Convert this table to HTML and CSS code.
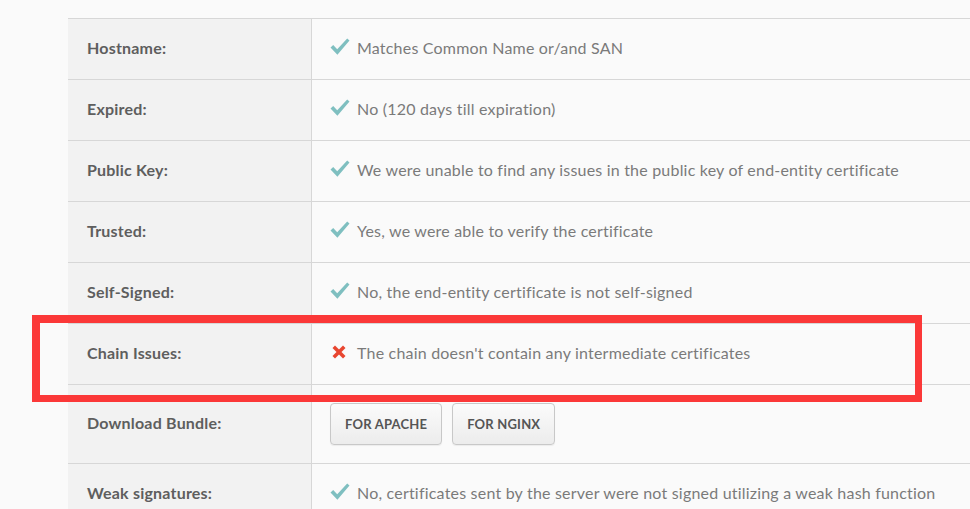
FILE: index.html
```html
<!DOCTYPE html>
<html>
<head>
<meta charset="utf-8">
<link rel="stylesheet" href="styles.css">
</head>
<body>
<div class="page">
  <div class="table">
    <div class="row">
      <div class="label">Hostname:</div>
      <div class="value"><svg class="ico ok" viewBox="0 0 20 18"><path d="M0.5 9.5 L3.2 7 L7.2 11.2 L17.2 0.5 L19.5 2.6 L7.4 16.8 Z"/></svg><span>Matches Common Name or/and SAN</span></div>
    </div>
    <div class="row">
      <div class="label">Expired:</div>
      <div class="value"><svg class="ico ok" viewBox="0 0 20 18"><path d="M0.5 9.5 L3.2 7 L7.2 11.2 L17.2 0.5 L19.5 2.6 L7.4 16.8 Z"/></svg><span>No (120 days till expiration)</span></div>
    </div>
    <div class="row">
      <div class="label">Public Key:</div>
      <div class="value"><svg class="ico ok" viewBox="0 0 20 18"><path d="M0.5 9.5 L3.2 7 L7.2 11.2 L17.2 0.5 L19.5 2.6 L7.4 16.8 Z"/></svg><span>We were unable to find any issues in the public key of end-entity certificate</span></div>
    </div>
    <div class="row">
      <div class="label">Trusted:</div>
      <div class="value"><svg class="ico ok" viewBox="0 0 20 18"><path d="M0.5 9.5 L3.2 7 L7.2 11.2 L17.2 0.5 L19.5 2.6 L7.4 16.8 Z"/></svg><span>Yes, we were able to verify the certificate</span></div>
    </div>
    <div class="row">
      <div class="label">Self-Signed:</div>
      <div class="value"><svg class="ico ok" viewBox="0 0 20 18"><path d="M0.5 9.5 L3.2 7 L7.2 11.2 L17.2 0.5 L19.5 2.6 L7.4 16.8 Z"/></svg><span>No, the end-entity certificate is not self-signed</span></div>
    </div>
    <div class="row">
      <div class="label">Chain Issues:</div>
      <div class="value"><svg class="ico bad" viewBox="0 0 14 14"><path d="M0.5 3 L3 0.5 L7 4.5 L11 0.5 L13.5 3 L9.5 7 L13.5 11 L11 13.5 L7 9.5 L3 13.5 L0.5 11 L4.5 7 Z"/></svg><span>The chain doesn't contain any intermediate certificates</span></div>
    </div>
    <div class="row tall">
      <div class="label">Download Bundle:</div>
      <div class="value buttons"><button class="btn">FOR APACHE</button><button class="btn">FOR NGINX</button></div>
    </div>
    <div class="row">
      <div class="label">Weak signatures:</div>
      <div class="value"><svg class="ico ok" viewBox="0 0 20 18"><path d="M0.5 9.5 L3.2 7 L7.2 11.2 L17.2 0.5 L19.5 2.6 L7.4 16.8 Z"/></svg><span>No, certificates sent by the server were not signed utilizing a weak hash function</span></div>
    </div>
  </div>
  <div class="highlight"></div>
</div>
</body>
</html>
```

FILE: styles.css
```css
html, body {
  margin: 0;
  padding: 0;
  background: #fafafa;
  overflow: hidden;
}
.page {
  position: relative;
  width: 970px;
  height: 509px;
  overflow: hidden;
  padding: 18px 0 0 68px;
  box-sizing: border-box;
}
.table {
  width: 1000px;
  border-top: 1px solid #d7d7d7;
  font-family: Lato, "Open Sans", sans-serif;
}
.row {
  display: grid;
  grid-template-columns: 244px 1fr;
  height: 61px;
  border-bottom: 1px solid #d7d7d7;
  box-sizing: border-box;
}
.row.tall {
  height: 79px;
}
.label {
  background: #f2f2f2;
  border-right: 1px solid #d7d7d7;
  display: flex;
  align-items: center;
  padding-left: 19px;
  padding-bottom: 4px;
  font-size: 16px;
  letter-spacing: 0.2px;
  font-weight: 700;
  color: #5e5e5e;
}
.value {
  display: flex;
  align-items: center;
  padding-left: 18px;
  padding-bottom: 4px;
  font-size: 16px;
  letter-spacing: 0.2px;
  color: #7a7a7a;
  white-space: nowrap;
}
.ico {
  flex: none;
}
.ico.ok {
  width: 20px;
  height: 18px;
  margin-right: 7px;
  fill: #7fbfc0;
}
.ico.bad {
  width: 14px;
  height: 14px;
  margin-left: 2px;
  margin-right: 11px;
  fill: #e8452f;
}
.buttons {
  gap: 10px;
  align-items: flex-start;
  padding-top: 18px;
  padding-bottom: 0;
}
.btn {
  height: 42px;
  padding: 0 14px;
  border: 1px solid #c8c8c8;
  border-radius: 4px;
  background: linear-gradient(#fbfbfb, #ececec);
  font-family: Lato, "Open Sans", sans-serif;
  font-size: 13px;
  letter-spacing: 0.2px;
  font-weight: 700;
  color: #555;
  box-shadow: 0 1px 1px rgba(0,0,0,0.06);
}
.highlight {
  position: absolute;
  left: 32px;
  top: 315px;
  width: 890px;
  height: 87px;
  box-sizing: border-box;
  border: 8px solid #fb3838;
  border-right-width: 7px;
  border-bottom-width: 7px;
}
```
